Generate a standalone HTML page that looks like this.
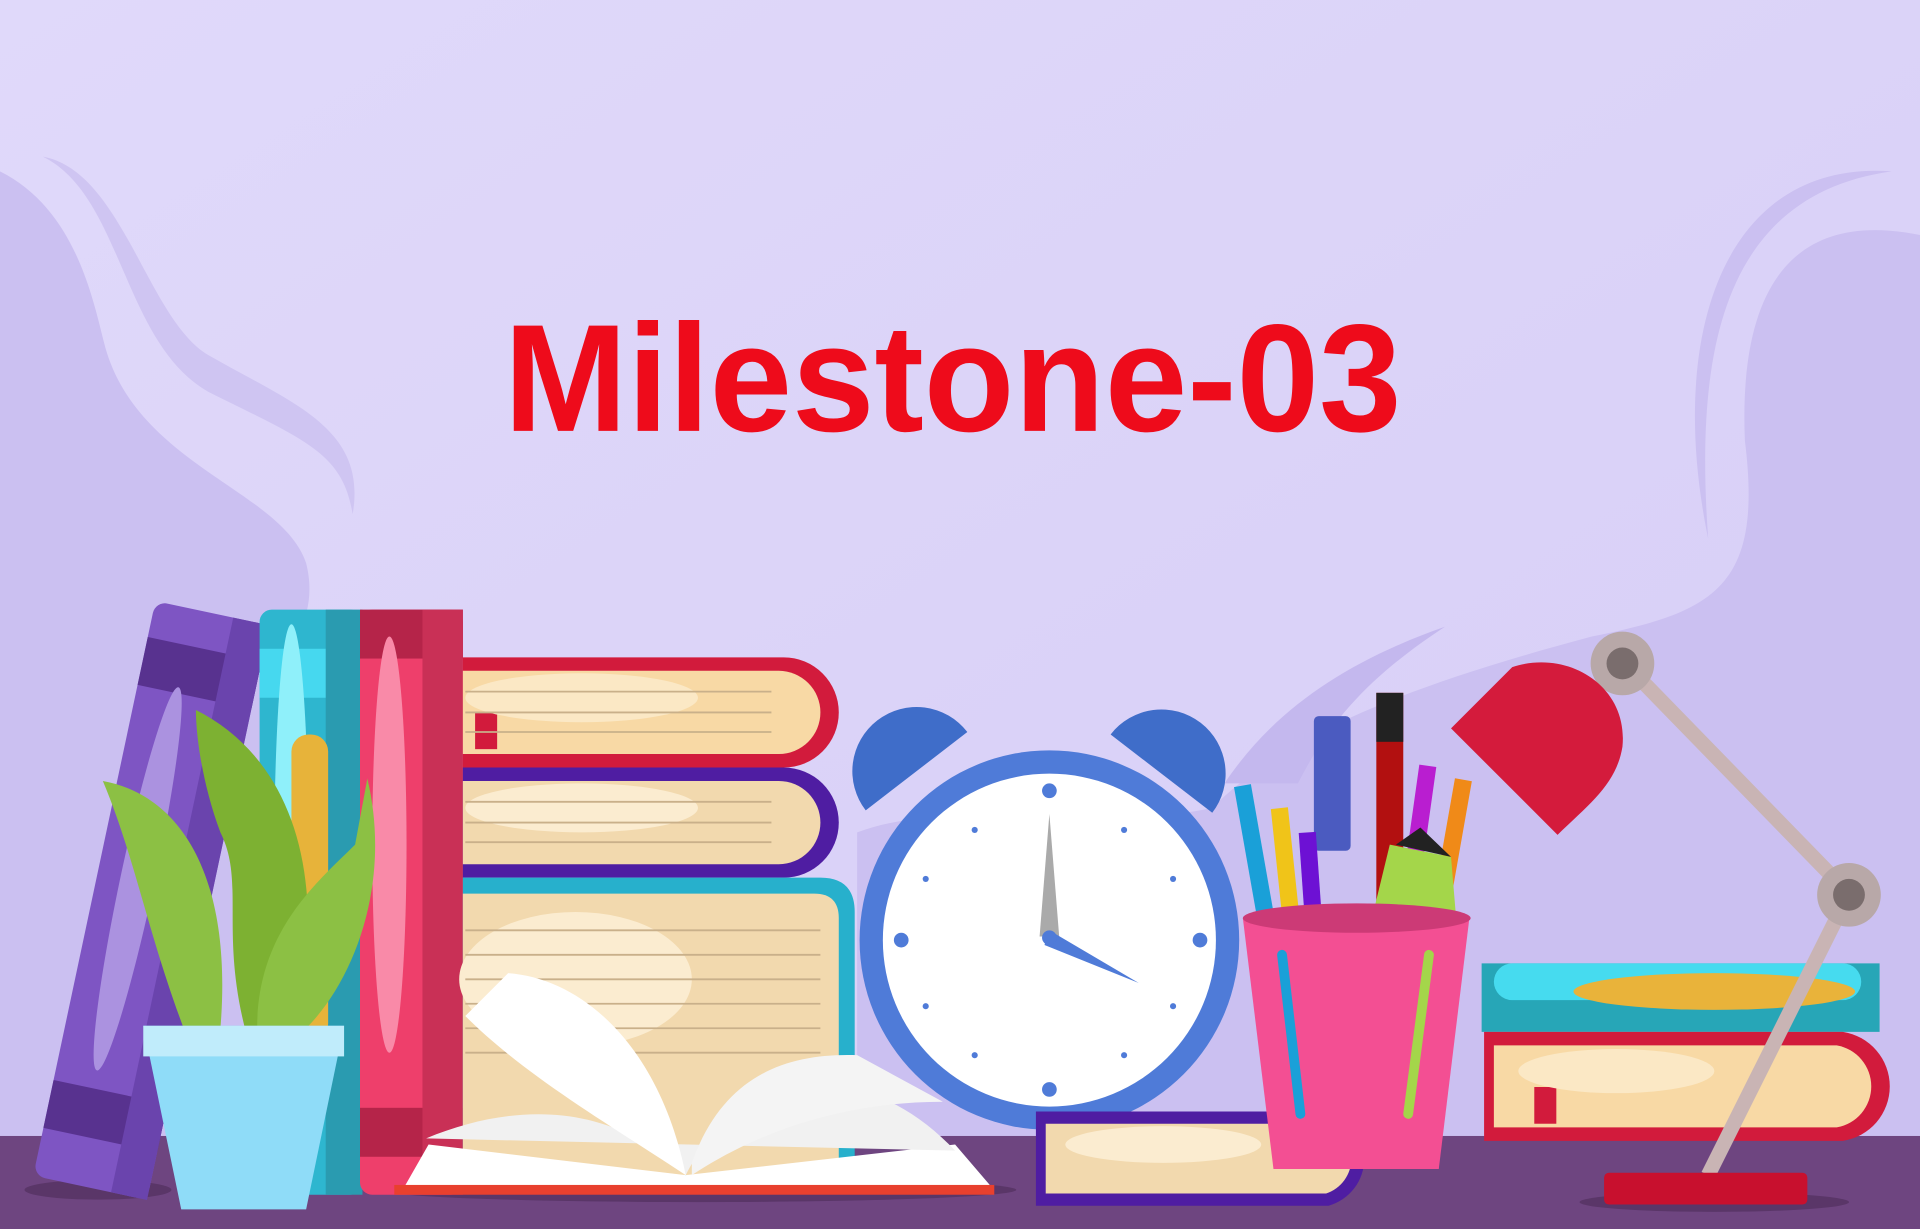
<!DOCTYPE html>
<html><head><meta charset="utf-8"><style>
html,body{margin:0;padding:0;width:1920px;height:1229px;overflow:hidden;background:#dcd4f8}
svg{display:block}
</style></head><body>
<svg width="1920" height="1229" viewBox="0 0 1568 1004" preserveAspectRatio="none" xmlns="http://www.w3.org/2000/svg">
<defs><linearGradient id="bg" x1="0" y1="0" x2="1" y2="1"><stop offset="0" stop-color="#e0d9fa"/><stop offset="1" stop-color="#d6cdf6"/></linearGradient></defs>
<rect width="1568" height="1004" fill="url(#bg)"/>
<path d="M0 140 C60 170 75 240 85 280 C110 380 230 400 250 460 C260 500 240 520 230 560 L230 940 L0 940 Z" fill="#cbc0f1"/>
<path d="M35 128 C100 140 120 260 170 290 C240 330 300 350 288 420 C280 370 250 360 170 320 C100 280 100 160 35 128 Z" fill="#cfc5f2"/>
<path d="M1568 192 C1460 170 1420 240 1425 360 C1440 480 1400 500 1300 520 C1150 560 1050 600 990 660 C900 680 780 650 700 680 L700 940 L1568 940 Z" fill="#cbc0f1"/>
<path d="M1545 140 C1410 130 1360 270 1395 440 C1385 300 1400 160 1545 140 Z" fill="#cbc0f1"/>
<path d="M1180 512 C1100 540 1040 580 1000 640 L1060 640 C1090 580 1130 545 1180 512 Z" fill="#c4b8ee"/>
<rect x="0" y="928" width="1568" height="76" fill="#6e4580"/>
<ellipse cx="80" cy="972" rx="60" ry="8" fill="#5a3668"/>
<ellipse cx="570" cy="972" rx="260" ry="10" fill="#5a3668"/>
<ellipse cx="1400" cy="982" rx="110" ry="8" fill="#5a3668"/>
<text x="778" y="352" text-anchor="middle" font-family="Liberation Sans, sans-serif" font-weight="700" font-size="125" fill="#ee0b1b" textLength="733" lengthAdjust="spacingAndGlyphs">Milestone-03</text>
<g transform="rotate(12 120 740)">
<rect x="75" y="495" width="95" height="480" rx="10" fill="#7e55c3"/>
<rect x="75" y="525" width="95" height="40" fill="#58328f"/>
<rect x="75" y="895" width="95" height="40" fill="#58328f"/>
<rect x="140" y="495" width="30" height="480" fill="#6a44ad"/>
<ellipse cx="108" cy="720" rx="14" ry="160" fill="#ab92e0"/>
</g>
<rect x="212" y="498" width="84" height="478" rx="10" fill="#2eb6cf"/>
<rect x="212" y="530" width="84" height="40" fill="#46d8ef"/>
<rect x="266" y="498" width="30" height="478" fill="#2a9bb0"/>
<ellipse cx="238" cy="700" rx="14" ry="190" fill="#8ff0fa"/>
<rect x="238" y="600" width="30" height="250" rx="14" fill="#e7b33a"/>
<rect x="294" y="498" width="84" height="478" rx="10" fill="#ee3f6b"/>
<rect x="294" y="498" width="84" height="40" fill="#b52449"/>
<rect x="294" y="905" width="84" height="40" fill="#b52449"/>
<rect x="345" y="498" width="33" height="478" fill="#c93056"/>
<ellipse cx="318" cy="690" rx="14" ry="170" fill="#f98aa8"/>
<path d="M378 537 H640 A45 45 0 0 1 640 627 H378 Z" fill="#d21b3c"/>
<path d="M378 548 H636 A34 34 0 0 1 636 616 H378 Z" fill="#f8d9a5"/>
<rect x="388" y="582" width="18" height="30" fill="#d21b3c"/>
<ellipse cx="475" cy="570" rx="95" ry="20" fill="#fbe8c5"/>
<path d="M378 627 H640 A45 45 0 0 1 640 717 H378 Z" fill="#4f1da2"/>
<path d="M378 638 H636 A34 34 0 0 1 636 706 H378 Z" fill="#f2d9ae"/>
<ellipse cx="475" cy="660" rx="95" ry="20" fill="#fbecd0"/>
<path d="M378 717 H670 Q698 717 698 745 V970 H378 Z" fill="#27b0cc"/>
<path d="M378 730 H665 Q685 730 685 750 V960 H378 Z" fill="#f2d9ae"/>
<ellipse cx="470" cy="800" rx="95" ry="55" fill="#fbecd0"/>
<g stroke="#c9b08a" stroke-width="1.5">
<line x1="380" y1="565" x2="630" y2="565"/><line x1="380" y1="582" x2="630" y2="582"/><line x1="380" y1="598" x2="630" y2="598"/>
<line x1="380" y1="655" x2="630" y2="655"/><line x1="380" y1="672" x2="630" y2="672"/><line x1="380" y1="688" x2="630" y2="688"/>
<line x1="380" y1="760" x2="670" y2="760"/><line x1="380" y1="780" x2="670" y2="780"/><line x1="380" y1="800" x2="670" y2="800"/><line x1="380" y1="820" x2="670" y2="820"/><line x1="380" y1="840" x2="670" y2="840"/><line x1="380" y1="860" x2="670" y2="860"/>
</g>
<path d="M160 580 C240 620 270 720 240 840 L200 840 C180 760 200 720 180 680 C165 640 160 600 160 580Z" fill="#7db132"/>
<path d="M84 638 C150 650 190 720 180 840 L150 840 C120 760 110 700 84 638Z" fill="#8cc044"/>
<path d="M300 636 C320 720 290 800 250 840 L210 840 C210 760 260 720 290 690Z" fill="#8cc044"/>
<path d="M117 838 H281 L250 988 H148 Z" fill="#8fdcf8"/>
<rect x="117" y="838" width="164" height="25" fill="#c0ecfb"/>
<path d="M330 970 L350 935 L560 960 L780 935 L810 970 Z" fill="#ffffff"/>
<rect x="322" y="968" width="490" height="8" fill="#e8402e"/>
<path d="M348 930 C420 900 500 900 560 960 C600 880 700 855 780 940 Z" fill="#f1f1f1"/>
<path d="M415 795 C480 800 540 860 560 960 C500 920 430 880 380 830 Z" fill="#ffffff"/>
<path d="M565 950 C590 880 640 860 700 862 L770 900 C680 900 610 930 565 960Z" fill="#f4f4f4"/>
<path d="M707 662 A50 50 0 1 1 790 598 Z" fill="#3f6dc9"/>
<path d="M907 600 A50 50 0 1 1 990 664 Z" fill="#3f6dc9"/>
<circle cx="857" cy="768" r="155" fill="#4f7bd8"/>
<circle cx="857" cy="768" r="136" fill="#ffffff"/>
<g fill="#4f7bd8"><circle cx="857" cy="646" r="6"/><circle cx="857" cy="890" r="6"/><circle cx="736" cy="768" r="6"/><circle cx="980" cy="768" r="6"/>
<circle cx="918" cy="678" r="2.5"/><circle cx="958" cy="718" r="2.5"/><circle cx="958" cy="822" r="2.5"/><circle cx="918" cy="862" r="2.5"/><circle cx="796" cy="862" r="2.5"/><circle cx="756" cy="822" r="2.5"/><circle cx="756" cy="718" r="2.5"/><circle cx="796" cy="678" r="2.5"/></g>
<path d="M857 665 L865 765 L849 765 Z" fill="#aaaaaa"/>
<path d="M857 760 L930 803 L853 772 Z" fill="#4f7bd8"/>
<circle cx="857" cy="766" r="6" fill="#4f7bd8"/>
<path d="M846 908 H1085 A40 40 0 0 1 1085 985 H846 Z" fill="#4f1da2"/>
<path d="M854 918 H1083 A30 30 0 0 1 1083 975 H854 Z" fill="#f2d9ae"/>
<ellipse cx="950" cy="935" rx="80" ry="15" fill="#fbecd0"/>
<rect x="1124" y="566" width="22" height="230" fill="#b21010"/><rect x="1124" y="566" width="22" height="40" fill="#222"/>
<rect x="1073" y="585" width="30" height="110" rx="4" fill="#4b5bc0"/>
<g transform="rotate(-10 1030 700)"><rect x="1018" y="640" width="14" height="180" fill="#1aa0d8"/></g>
<rect x="1042" y="660" width="14" height="170" fill="#f0c419" transform="rotate(-6 1049 700)"/>
<rect x="1062" y="680" width="14" height="160" fill="#6d11d4" transform="rotate(-4 1069 700)"/>
<rect x="1150" y="625" width="14" height="130" fill="#b91ed0" transform="rotate(8 1157 690)"/>
<rect x="1177" y="636" width="14" height="140" fill="#f08a18" transform="rotate(10 1184 700)"/>
<path d="M1135 690 L1185 700 L1190 760 L1118 760 Z" fill="#a4d64a"/>
<path d="M1140 690 L1160 676 L1185 700 Z" fill="#222"/>
<path d="M1015 750 H1200 L1175 955 H1040 Z" fill="#f34f93"/>
<ellipse cx="1108" cy="750" rx="93" ry="12" fill="#cc3a76"/>
<line x1="1047" y1="780" x2="1062" y2="910" stroke="#1aa0d8" stroke-width="8" stroke-linecap="round"/>
<line x1="1167" y1="780" x2="1150" y2="910" stroke="#a4d64a" stroke-width="8" stroke-linecap="round"/>
<path d="M1210 787 H1535 V843 H1210 Z" fill="#27a6b7"/>
<rect x="1220" y="787" width="300" height="30" rx="15" fill="#46dbef"/>
<ellipse cx="1400" cy="810" rx="115" ry="15" fill="#e9b33a"/>
<path d="M1212 843 H1505 A45 45 0 0 1 1505 932 H1212 Z" fill="#d21b3c"/>
<path d="M1220 854 H1500 A34 34 0 0 1 1500 921 H1220 Z" fill="#f8d9a5"/>
<rect x="1253" y="888" width="18" height="30" fill="#d21b3c"/>
<ellipse cx="1320" cy="875" rx="80" ry="18" fill="#fbe8c5"/>
<line x1="1325" y1="540" x2="1510" y2="730" stroke="#c9b4b4" stroke-width="12"/>
<line x1="1510" y1="730" x2="1395" y2="960" stroke="#c9b4b4" stroke-width="12"/>
<circle cx="1325" cy="542" r="26" fill="#b8a8a8"/><circle cx="1325" cy="542" r="13" fill="#7a6d6d"/>
<circle cx="1510" cy="731" r="26" fill="#b8a8a8"/><circle cx="1510" cy="731" r="13" fill="#7a6d6d"/>
<path d="M1185 595 L1235 545 C1280 530 1330 560 1325 610 C1320 640 1300 655 1272 682 Z" fill="#d41b3c"/>
<rect x="1310" y="958" width="166" height="26" rx="4" fill="#c8102e"/>
</svg>
</body></html>
